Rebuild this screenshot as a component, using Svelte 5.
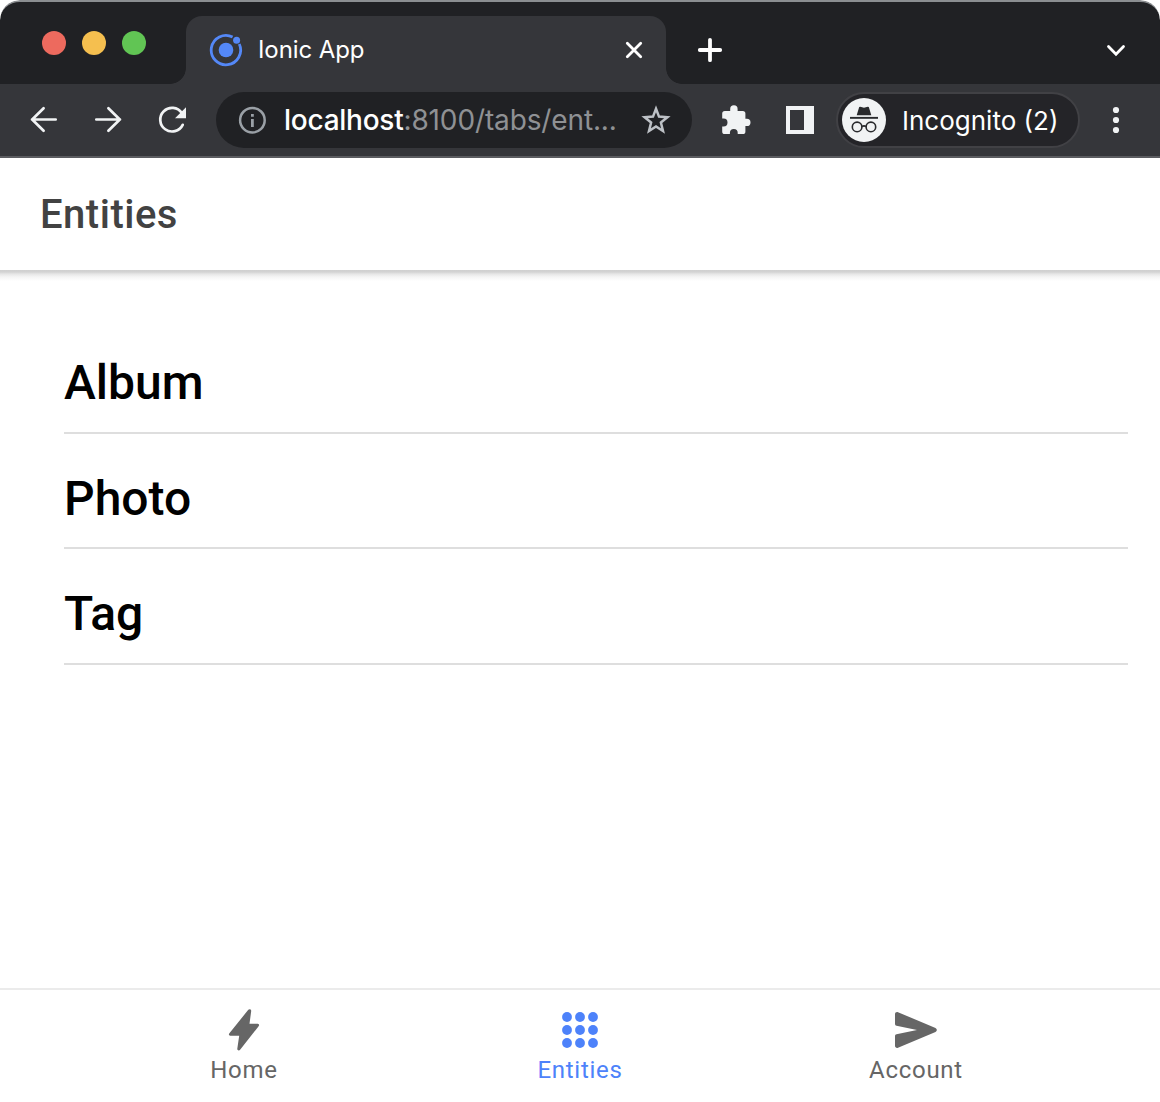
<script>
  const entities = ['Album', 'Photo', 'Tag'];
  const dots = [9, 22, 35];
  const tabs = [
    { id: 'home', label: 'Home' },
    { id: 'entities', label: 'Entities' },
    { id: 'account', label: 'Account' }
  ];
  let active = $state('entities');
</script>

<div class="window">
  <div class="strip">
    <div class="lights">
      <span class="red"></span><span class="amber"></span><span class="green"></span>
    </div>
    <div class="tab">
      <svg class="favicon" width="34" height="34" viewBox="0 0 34 34">
        <path d="M23.600 4A14.700 14.700 0 1 0 30.300 11" fill="none" stroke="#5488f7" stroke-width="2.800" />
        <circle cx="17" cy="17" r="7.300" fill="#5488f7" />
        <circle cx="27.600" cy="7.200" r="3.500" fill="#5488f7" />
      </svg>
      <span class="tab-title">Ionic App</span>
      <svg class="close" width="20" height="20" viewBox="0 0 20 20">
        <path d="M3.300 3.300l13.400 13.400M16.700 3.300L3.300 16.700" stroke="#fff" stroke-width="2.800" stroke-linecap="round" />
      </svg>
    </div>
    <svg class="plus" width="28" height="28" viewBox="0 0 28 28">
      <path d="M14 3.800v20.400M3.800 14h20.400" stroke="#fff" stroke-width="3.800" stroke-linecap="round" />
    </svg>
    <svg class="chevron" width="24" height="20" viewBox="0 0 24 20">
      <path d="M4.500 6.600L12 14.200l7.500-7.600" fill="none" stroke="#fff" stroke-width="2.800" stroke-linecap="round" />
    </svg>
  </div>

  <div class="toolbar">
    <svg width="64" height="72" viewBox="12 84 64 72" fill="none" stroke="#f1f3f4" stroke-width="2.700" stroke-linecap="round" stroke-linejoin="round">
      <path d="M55.700 119.500H32M43.600 108.300L32.200 119.500l11.400 11.200" />
    </svg>
    <svg width="64" height="72" viewBox="76 84 64 72" fill="none" stroke="#f1f3f4" stroke-width="2.700" stroke-linecap="round" stroke-linejoin="round">
      <path d="M96.300 119.500H120M108.400 108.300L119.800 119.500l-11.400 11.200" />
    </svg>
    <svg width="76" height="72" viewBox="140 84 76 72">
      <path d="M181.800 113A11.800 11.800 0 1 0 182.700 124.800" fill="none" stroke="#f1f3f4" stroke-width="2.700" stroke-linecap="round" />
      <path d="M186 107.200v11H175z" fill="#f1f3f4" />
    </svg>
    <div class="address">
      <svg class="info" width="28" height="28" viewBox="0 0 28 28">
        <circle cx="14.400" cy="14.200" r="12.300" fill="none" stroke="#9aa0a6" stroke-width="2.500" />
        <path d="M13 8h2.800v2.700H13zM13 13h2.800v8H13z" fill="#9aa0a6" />
      </svg>
      <span class="url"><b>localhost</b><span>:8100/tabs/ent...</span></span>
      <svg class="star" width="32" height="32" viewBox="0 0 32 32">
        <path d="M16 4.800l3 7.800 8.400.6-6.500 5.300 2.100 8.500-7-4.500-7 4.500 2.100-8.500-6.500-5.300 8.400-.6z" fill="none" stroke="#bdc1c6" stroke-width="2.500" />
      </svg>
    </div>
    <svg class="puzzle" width="30" height="30" viewBox="0 0 30 30" fill="#f1f3f4">
      <path d="M3.800 5.900h5.400V4a3.700 3.700 0 0 1 7.400 0v1.900h5.200a2.600 2.600 0 0 1 2.600 2.600v5.200h1.400a3.700 3.700 0 0 1 0 7.400h-1.400v5.400a2.600 2.600 0 0 1-2.600 2.600h-5.100v-1.300a3.900 3.900 0 0 0-7.800 0v1.300H3.800a2.600 2.600 0 0 1-2.600-2.600v-5.100h1.400a3.900 3.900 0 0 0 0-7.800H1.200V8.500a2.600 2.600 0 0 1 2.600-2.600z" />
    </svg>
    <svg class="panel" width="28" height="28" viewBox="0 0 28 28">
      <path d="M0 0h28v28H0zM4 4v20h14V4z" fill="#f1f3f4" fill-rule="evenodd" />
    </svg>
    <div class="profile">
      <svg width="44" height="44" viewBox="0 0 44 44">
        <circle cx="22" cy="22" r="22" fill="#f1f3f4" />
        <path d="M17.200 8.900q1-.5 2 0l2.800.9 2.800-.9q1-.5 2 0L29.300 17.300H14.700z" fill="#292a2d" />
        <path d="M8 18.900h28v1.900H8z" fill="#292a2d" />
        <g fill="none" stroke="#292a2d" stroke-width="1.600">
          <circle cx="15.100" cy="28.900" r="4.800" />
          <circle cx="28.900" cy="28.900" r="4.800" />
          <path d="M20 28.500q2-1.200 4 0" />
        </g>
      </svg>
      <span>Incognito (2)</span>
    </div>
    <svg class="more" width="8" height="28" viewBox="0 0 8 28" fill="#f1f3f4">
      <circle cx="4" cy="4" r="3.100" /><circle cx="4" cy="14" r="3.100" /><circle cx="4" cy="24" r="3.100" />
    </svg>
  </div>

  <header><h1>Entities</h1></header>

  <main>
    {#each entities as name}
      <div class="item"><h2>{name}</h2></div>
    {/each}
  </main>

  <nav>
    {#each tabs as tab}
      <button class:active={active === tab.id} onclick={() => (active = tab.id)}>
        <svg width="44" height="44" viewBox="0 0 44 44" fill="currentColor">
          {#if tab.id === 'home'}
            <path d="M26.300 1.800C27.400.6 29.400 1.200 29.200 3L27.500 15.800H35.800Q38 16.200 36.600 18.300L18.300 41.600C17 43.200 15 42.300 15.300 40.700L17.200 27.700H8.200Q6 27.200 7.400 25.200z" />
          {:else if tab.id === 'entities'}
            {#each dots as cy}
              {#each dots as cx}
                <circle {cx} {cy} r="4.900" />
              {/each}
            {/each}
          {:else}
            <path d="M1 6.200C1 4.500 2.500 3.600 4 4.200L41.500 20Q44.200 22 41.500 24L4 39.800C2.500 40.400 1 39.500 1 37.800V28Q1 26.500 2.500 26.300L23 22 2.500 17.800Q1 17.500 1 16z" />
          {/if}
        </svg>
        <span>{tab.label}</span>
      </button>
    {/each}
  </nav>
</div>

<style>
  :global(body) { background: #fff; }
  * { box-sizing: border-box; }
  svg { display: block; flex: none; }
  .window {
    width: 1160px;
    height: 1102px;
    display: flex;
    flex-direction: column;
    overflow: hidden;
    background: #fff;
    border-radius: 20px 20px 0 0;
    font-family: Roboto, sans-serif;
  }
  .strip {
    height: 84px;
    flex: none;
    display: flex;
    padding-left: 42px;
    background: #202124;
    border-top: 2px solid #8b8e91;
    border-radius: 20px 20px 0 0;
    font-family: Inter, sans-serif;
  }
  .lights { display: flex; gap: 16px; width: 144px; padding-top: 29px; }
  .lights span { width: 24px; height: 24px; border-radius: 50%; }
  .red { background: #ed6a5e; }
  .amber { background: #f5bf4f; }
  .green { background: #61c554; }
  .tab {
    position: relative;
    width: 480px;
    height: 68px;
    margin-top: 14px;
    padding: 0 22px 0 23px;
    display: flex;
    align-items: center;
    background: #35363a;
    border-radius: 16px 16px 0 0;
  }
  .tab::before,
  .tab::after {
    content: '';
    position: absolute;
    bottom: 0;
    width: 16px;
    height: 16px;
  }
  .tab::before { right: 100%; background: radial-gradient(circle at 0 0, #202124 15.500px, #35363a 16.200px); }
  .tab::after { left: 100%; background: radial-gradient(circle at 100% 0, #202124 15.500px, #35363a 16.200px); }
  .tab-title {
    margin-left: 15px;
    padding-bottom: 2px;
    color: #fff;
    font-size: 24px;
    letter-spacing: -0.100px;
    white-space: nowrap;
  }
  .close { margin-left: auto; }
  .plus { margin: 34px 0 0 30px; }
  .chevron { margin: 38px 32px 0 auto; }
  .toolbar {
    height: 74px;
    flex: none;
    display: flex;
    align-items: center;
    padding-left: 12px;
    background: #35363a;
    border-bottom: 2px solid #5b5c60;
    font-family: Inter, sans-serif;
  }
  .address {
    width: 476px;
    height: 56px;
    display: flex;
    align-items: center;
    padding: 0 20px 0 22px;
    border-radius: 28px;
    background: #202124;
  }
  .url { margin-left: 18px; color: #8f9194; font-size: 28px; letter-spacing: -0.130px; white-space: nowrap; }
  .url b { color: #fff; font-weight: 500; letter-spacing: -0.250px; }
  .star { margin-left: auto; }
  .puzzle { margin-left: 29px; }
  .panel { margin-left: 35px; }
  .profile {
    width: 244px;
    height: 56px;
    margin-left: 22px;
    display: flex;
    align-items: center;
    gap: 16px;
    padding-left: 4px;
    border: 2px solid #414145;
    border-radius: 28px;
    background: #242428;
    color: #fff;
    font-size: 26px;
    white-space: nowrap;
  }
  .more { margin-left: 32px; }
  header {
    position: relative;
    height: 112px;
    flex: none;
    display: flex;
    align-items: center;
    padding: 2px 0 0 40px;
  }
  /* Full-width elevation shadow under the title bar */
  header::after {
    content: '';
    position: absolute;
    top: 100%;
    left: 0;
    right: 0;
    height: 11px;
    background: linear-gradient(#d0d0d0, #d3d3d3 2px, #e6e6e6 4px, #f5f5f5 7px, #fff);
  }
  h1 { margin: 0; color: #424242; font-size: 40px; font-weight: 500; line-height: 48px; letter-spacing: 0.500px; }
  main { flex: 1; padding: 48px 32px 0 64px; }
  .item { height: 115.500px; padding-top: 36px; border-bottom: 2px solid #dedede; }
  h2 { margin: 0; color: #000; font-size: 48px; font-weight: 500; line-height: 58px; }
  nav {
    height: 114px;
    flex: none;
    display: flex;
    justify-content: center;
    border-top: 2px solid #ebebeb;
  }
  button {
    width: 336px;
    padding: 18px 0 0;
    display: flex;
    flex-direction: column;
    align-items: center;
    border: 0;
    background: none;
    color: #666;
    font: 400 24px/28px Roboto, sans-serif;
    letter-spacing: 0.720px;
  }
  button span { margin-top: 4px; }
  button.active { color: #4d82fa; }
</style>
